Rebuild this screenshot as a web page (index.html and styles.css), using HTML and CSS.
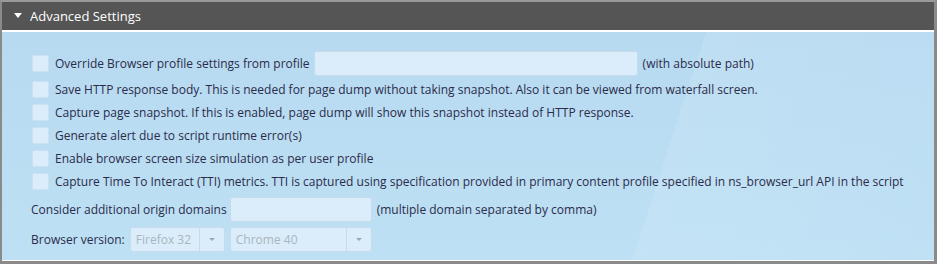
FILE: index.html
```html
<!DOCTYPE html>
<html>
<head>
  <title>Advanced Settings</title>
  <link rel="stylesheet" href="styles.css">
</head>
<body>
  <div class="panel">
    <div class="panel-header">
      <span class="caret"></span>
      <span class="panel-title">Advanced Settings</span>
    </div>
    <div class="panel-body">
      <div class="row row-first">
        <span class="check"></span>
        <span class="label">Override Browser profile settings from profile</span>
        <span class="field field-path"></span>
        <span class="label">(with absolute path)</span>
      </div>
      <div class="row">
        <span class="check"></span>
        <span class="label">Save HTTP response body. This is needed for page dump without taking snapshot. Also it can be viewed from waterfall screen.</span>
      </div>
      <div class="row">
        <span class="check"></span>
        <span class="label">Capture page snapshot. If this is enabled, page dump will show this snapshot instead of HTTP response.</span>
      </div>
      <div class="row">
        <span class="check"></span>
        <span class="label">Generate alert due to script runtime error(s)</span>
      </div>
      <div class="row">
        <span class="check"></span>
        <span class="label">Enable browser screen size simulation as per user profile</span>
      </div>
      <div class="row">
        <span class="check"></span>
        <span class="label">Capture Time To Interact (TTI) metrics. TTI is captured using specification provided in primary content profile specified in ns_browser_url API in the script</span>
      </div>
      <div class="row row-field">
        <span class="label">Consider additional origin domains</span>
        <span class="field field-domains"></span>
        <span class="label">(multiple domain separated by comma)</span>
      </div>
      <div class="row row-select">
        <span class="label">Browser version:</span>
        <span class="select select-ff">
          <span class="select-text">Firefox 32</span>
          <span class="select-arrow"></span>
        </span>
        <span class="select select-chrome">
          <span class="select-text">Chrome 40</span>
          <span class="select-arrow"></span>
        </span>
      </div>
    </div>
  </div>
</body>
</html>
```

FILE: styles.css
```css
body {
  margin: 0;
  font-family: 'Open Sans', sans-serif;
  font-size: 12px;
  color: #2b2b4a;
  background: #fff;
}

.panel {
  width: 937px;
  height: 264px;
  border-top: 2px solid #9a9a9a;
  border-left: 2px solid #8a8a8a;
  border-right: 3px solid #8a8a8a;
  border-bottom: 3px solid #8a8a8a;
  box-sizing: border-box;
}

.panel-header {
  height: 28px;
  background: #555;
  border-bottom: 2px solid #fff;
  display: flex;
  align-items: center;
  padding-left: 12px;
  color: #fff;
}

.caret {
  width: 0;
  height: 0;
  border-left: 4px solid transparent;
  border-right: 4px solid transparent;
  border-top: 5px solid #fff;
  margin-right: 8px;
  margin-top: -2px;
}

.panel-title {
  font-size: 13px;
}

/* soft diagonal sheen like the original theme */
.panel-body {
  height: 229px;
  box-sizing: border-box;
  padding: 17px 0 0 29px;
  border-bottom: 1px solid #fff;
  background:
    linear-gradient(108deg, transparent 70%, rgba(255,255,255,0.1) 70%, rgba(255,255,255,0.04) 100%),
    linear-gradient(180deg, #b7daf1 0%, #bde0f4 100%);
}

.row {
  display: flex;
  align-items: center;
  height: 23px;
}

.row-first {
  height: 29px;
}

.check {
  width: 15px;
  height: 15px;
  background: #dbedfa;
  border: 1px solid #c9e1f3;
  border-radius: 2px;
  margin: 0 6px 0 1px;
}

.field {
  height: 25px;
  background: #dbedfa;
  border: 1px solid #c6dcec;
  border-radius: 3px;
  margin: 0 5px 0 4px;
  box-sizing: border-box;
}

.field-path {
  width: 324px;
}

.field-domains {
  width: 142px;
  margin-left: 3px;
}

.row-field {
  height: 30px;
  margin-top: 1px;
}

.row-select {
  height: 30px;
}

.select {
  display: flex;
  height: 25px;
  box-sizing: border-box;
  background: #dbedfa;
  border: 1px solid #c6dcec;
  border-radius: 3px;
  margin-left: 5px;
  color: #a9b6c0;
}

.select-ff {
  width: 95px;
}

.select-chrome {
  width: 142px;
}

.select-text {
  flex: 1;
  padding-left: 5px;
  line-height: 23px;
}

.select-arrow {
  width: 24px;
  border-left: 1px solid #c6dcec;
  position: relative;
}

.select-arrow::after {
  content: '';
  position: absolute;
  left: 9px;
  top: 10px;
  border-left: 3px solid transparent;
  border-right: 3px solid transparent;
  border-top: 3px solid #9aa8b3;
}
```
